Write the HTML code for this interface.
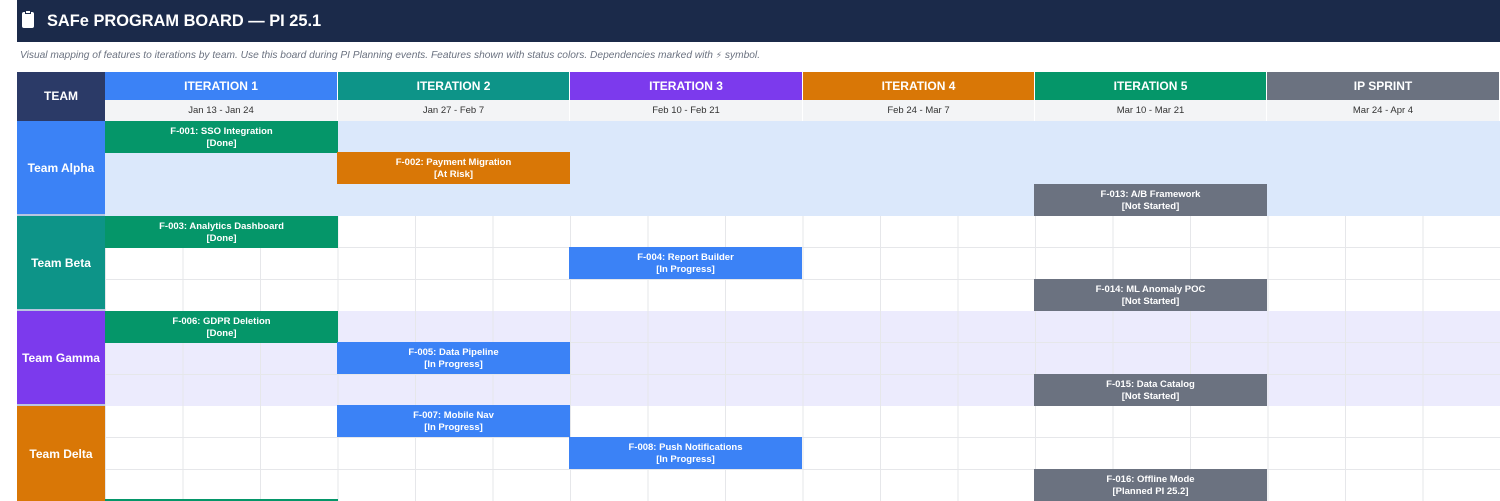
<!DOCTYPE html>
<html><head><meta charset="utf-8"><style>
*{margin:0;padding:0;box-sizing:border-box}
body{width:1500px;height:501px;overflow:hidden;background:#fff;font-family:"Liberation Sans",Arial,sans-serif;position:relative}
.a{position:absolute}
.title{left:17px;top:0;width:1483px;height:42px;background:#1b2a4a;color:#fff;font-weight:bold;font-size:16.4px;line-height:42px;padding-left:30px}
.sub{left:20px;top:50px;font-size:10.2px;font-style:italic;color:#6b7280}
.ih{top:72px;height:28px;color:#fff;font-weight:bold;font-size:12px;line-height:28px;text-align:center;border-right:1px solid #fff}
.dh{top:100px;height:21px;background:#f3f4f6;font-size:9.5px;color:#333;line-height:21px;text-align:center;border-right:1px solid #fff}
.team{left:17px;width:88px;height:95px;color:#fff;font-weight:bold;font-size:12px;display:flex;align-items:center;justify-content:center;border-bottom:2px solid #b9c6e0}
.row{left:105px;width:1395px;height:95px;background-image:repeating-linear-gradient(to right,#e6e7ea 0 1px,transparent 1px 77.5px),repeating-linear-gradient(to bottom,transparent 0 31px,#e6e7ea 31px 32px,transparent 32px 31.67px)}
.f{height:32px;color:#fff;font-weight:bold;font-size:9.5px;line-height:12px;text-align:center;padding-top:4.5px;width:233px}
.g{background:#059669}.b{background:#3b82f6}.o{background:#d97706}.x{background:#6b7280}
</style></head><body>
<div class="a title">SAFe PROGRAM BOARD — PI 25.1</div>
<div class="a" style="left:22px;top:12px;width:12px;height:16px;background:#fff;border-radius:2px"></div>
<div class="a" style="left:25px;top:10px;width:6px;height:4px;background:#fff;border:1px solid #1b2a4a"></div>
<div class="a sub">Visual mapping of features to iterations by team. Use this board during PI Planning events. Features shown with status colors. Dependencies marked with <span style="font-family:'DejaVu Sans',sans-serif;font-style:normal;font-size:9px">⚡&#xFE0E;</span> symbol.</div>

<div class="a" style="left:17px;top:72px;width:88px;height:49px;background:#2b3a67;color:#fff;font-weight:bold;font-size:12px;line-height:49px;text-align:center">TEAM</div>
<div class="a ih" style="left:105px;width:233px;background:#3b82f6">ITERATION 1</div>
<div class="a ih" style="left:338px;width:232px;background:#0d9488">ITERATION 2</div>
<div class="a ih" style="left:570px;width:233px;background:#7c3aed">ITERATION 3</div>
<div class="a ih" style="left:803px;width:232px;background:#d97706">ITERATION 4</div>
<div class="a ih" style="left:1035px;width:232px;background:#059669">ITERATION 5</div>
<div class="a ih" style="left:1267px;width:233px;background:#6b7280">IP SPRINT</div>
<div class="a dh" style="left:105px;width:233px">Jan 13 - Jan 24</div>
<div class="a dh" style="left:338px;width:232px">Jan 27 - Feb 7</div>
<div class="a dh" style="left:570px;width:233px">Feb 10 - Feb 21</div>
<div class="a dh" style="left:803px;width:232px">Feb 24 - Mar 7</div>
<div class="a dh" style="left:1035px;width:232px">Mar 10 - Mar 21</div>
<div class="a dh" style="left:1267px;width:233px">Mar 24 - Apr 4</div>

<div class="a team" style="top:121px;background:#3b82f6">Team Alpha</div>
<div class="a team" style="top:216px;background:#0d9488">Team Beta</div>
<div class="a team" style="top:311px;background:#7c3aed">Team Gamma</div>
<div class="a team" style="top:406px;background:#d97706;border:0">Team Delta</div>

<div class="a row" style="top:121px;background:#dbe8fb"></div>
<div class="a row" style="top:216px"></div>
<div class="a row" style="top:311px;background-color:#ecebfd"></div>
<div class="a row" style="top:406px"></div>

<div class="a f g" style="left:105px;top:121px">F-001: SSO Integration<br>[Done]</div>
<div class="a f o" style="left:337px;top:152px">F-002: Payment Migration<br>[At Risk]</div>
<div class="a f x" style="left:1034px;top:184px">F-013: A/B Framework<br>[Not Started]</div>

<div class="a f g" style="left:105px;top:216px">F-003: Analytics Dashboard<br>[Done]</div>
<div class="a f b" style="left:569px;top:247px">F-004: Report Builder<br>[In Progress]</div>
<div class="a f x" style="left:1034px;top:279px">F-014: ML Anomaly POC<br>[Not Started]</div>

<div class="a f g" style="left:105px;top:311px">F-006: GDPR Deletion<br>[Done]</div>
<div class="a f b" style="left:337px;top:342px">F-005: Data Pipeline<br>[In Progress]</div>
<div class="a f x" style="left:1034px;top:374px">F-015: Data Catalog<br>[Not Started]</div>

<div class="a f b" style="left:337px;top:405px">F-007: Mobile Nav<br>[In Progress]</div>
<div class="a f b" style="left:569px;top:437px">F-008: Push Notifications<br>[In Progress]</div>
<div class="a f x" style="left:1034px;top:469px">F-016: Offline Mode<br>[Planned PI 25.2]</div>
<div class="a" style="left:105px;top:499px;width:233px;height:2px;background:#059669"></div>
</body></html>
